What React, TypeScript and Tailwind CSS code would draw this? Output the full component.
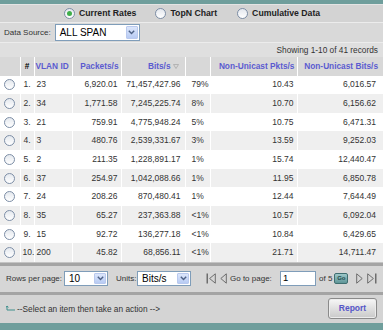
import React from 'react';

type Row = { n: number; vlan: string; pkts: string; bits: string; pct: string; nup: string; nub: string };

const rows: Row[] = [
    { n: 1, vlan: '23', pkts: '6,920.01', bits: '71,457,427.96', pct: '79%', nup: '10.43', nub: '6,016.57' },
    { n: 2, vlan: '34', pkts: '1,771.58', bits: '7,245,225.74', pct: '8%', nup: '10.70', nub: '6,156.62' },
    { n: 3, vlan: '21', pkts: '759.91', bits: '4,775,948.24', pct: '5%', nup: '10.75', nub: '6,471.31' },
    { n: 4, vlan: '3', pkts: '480.76', bits: '2,539,331.67', pct: '3%', nup: '13.59', nub: '9,252.03' },
    { n: 5, vlan: '2', pkts: '211.35', bits: '1,228,891.17', pct: '1%', nup: '15.74', nub: '12,440.47' },
    { n: 6, vlan: '37', pkts: '254.97', bits: '1,042,088.66', pct: '1%', nup: '11.95', nub: '6,850.78' },
    { n: 7, vlan: '24', pkts: '208.26', bits: '870,480.41', pct: '1%', nup: '12.44', nub: '7,644.49' },
    { n: 8, vlan: '35', pkts: '65.27', bits: '237,363.88', pct: '<1%', nup: '10.57', nub: '6,092.04' },
    { n: 9, vlan: '15', pkts: '92.72', bits: '136,277.18', pct: '<1%', nup: '10.84', nub: '6,429.65' },
    { n: 10, vlan: '200', pkts: '45.82', bits: '68,856.11', pct: '<1%', nup: '21.71', nub: '14,711.47' },
];

const Radio = ({ checked = false }: { checked?: boolean }) => (
    <span className="inline-flex w-[11px] h-[11px] rounded-full border border-[#7d8ea6] bg-gradient-to-b from-[#e4e8ee] to-white items-center justify-center shrink-0">
        {checked && <span className="w-[5px] h-[5px] rounded-full bg-[#3fae4a]" />}
    </span>
);

const Chevron = () => (
    <svg width="7" height="5" viewBox="0 0 7 5">
        <path d="M0.8 0.8 L3.5 3.6 L6.2 0.8" fill="none" stroke="#4d6185" strokeWidth="1.4" />
    </svg>
);

const Select = ({ value, className, textSize }: { value: string; className: string; textSize: string }) => (
    <div className={`flex items-stretch shrink-0 border border-[#7f9db9] bg-white p-[1px] ${className}`}>
        <span className={`flex-1 flex items-center pl-[3px] text-black ${textSize}`}>{value}</span>
        <span className="w-[12px] flex items-center justify-center bg-gradient-to-b from-[#dce6fb] to-[#b8cbf3] border border-[#b9c9ee] rounded-[1px]">
            <Chevron />
        </span>
    </div>
);

const NavIcon = ({ dir, bar }: { dir: 'l' | 'r'; bar?: boolean }) => (
    <svg width={bar ? 10 : 7} height="11" viewBox={bar ? '0 0 10 11' : '0 0 7 11'} className="shrink-0">
        {dir === 'l' ? (
            bar ? (
                <>
                    <rect x="0.5" y="0.5" width="1.5" height="10" fill="#6d6d6d" />
                    <path d="M9.3 0.8 L3.6 5.5 L9.3 10.2 Z" fill="none" stroke="#6d6d6d" strokeWidth="1" />
                </>
            ) : (
                <path d="M6.3 0.8 L0.8 5.5 L6.3 10.2 Z" fill="none" stroke="#6d6d6d" strokeWidth="1" />
            )
        ) : bar ? (
            <>
                <path d="M0.7 0.8 L6.4 5.5 L0.7 10.2 Z" fill="none" stroke="#6d6d6d" strokeWidth="1" />
                <rect x="8" y="0.5" width="1.5" height="10" fill="#6d6d6d" />
            </>
        ) : (
            <path d="M0.7 0.8 L6.2 5.5 L0.7 10.2 Z" fill="none" stroke="#6d6d6d" strokeWidth="1" />
        )}
    </svg>
);

const th = 'h-[18.5px] p-0 text-[8.3px] font-bold text-[#5b5bd0] border-r border-white whitespace-nowrap';
const td = 'h-[18.67px] p-0 text-[8.5px] text-[#333] border-r border-white whitespace-nowrap';

export default function App() {
    return (
        <div className="w-[383px] h-[330px] flex flex-col bg-[#d6d6d6] overflow-hidden" style={{ fontFamily: '"Liberation Sans", Arial, sans-serif' }}>
            {/* Top bar */}
            <div className="h-[4px] bg-[#6f9e9c] shrink-0" />

            {/* View options */}
            <div className="h-[19px] flex items-center border-t border-[#e4e4e4] border-b border-b-[#ececec] bg-[#d3d3d3] pl-[64px] text-[8.7px] font-bold text-[#222]">
                <span className="flex items-center gap-[4px]"><Radio checked />Current Rates</span>
                <span className="flex items-center gap-[4px] ml-[19px]"><Radio />TopN Chart</span>
                <span className="flex items-center gap-[4px] ml-[20px]"><Radio />Cumulative Data</span>
            </div>

            {/* Data source */}
            <div className="h-[20px] flex items-center gap-[4px] pl-[4px] bg-[#d9d9d9] border-b border-[#ececec] text-[8px] text-[#333]">
                <span>Data Source:</span>
                <Select value="ALL SPAN" className="w-[85px] h-[17px]" textSize="text-[10px]" />
            </div>

            {/* Records */}
            <div className="h-[14px] flex items-center justify-end pr-[5px] bg-[#dfdfdf] text-[8.3px] text-[#333]">
                Showing 1-10 of 41 records
            </div>

            {/* Table */}
            <table className="w-[383px] table-fixed border-collapse shrink-0">
                <colgroup>
                    <col className="w-[20px]" />
                    <col className="w-[14px]" />
                    <col className="w-[38px]" />
                    <col className="w-[49px]" />
                    <col className="w-[64px]" />
                    <col className="w-[25px]" />
                    <col className="w-[87px]" />
                    <col className="w-[86px]" />
                </colgroup>
                <thead>
                    <tr className="bg-[#d8d8d8]">
                        <th className={th} />
                        <th className={`${th} text-center text-black`}>#</th>
                        <th className={`${th} text-left pl-[1px]`}>VLAN ID</th>
                        <th className={`${th} text-right pr-[2px]`}>Packets/s</th>
                        <th className={`${th} text-right pr-[6px]`}>
                            <span className="inline-flex items-center gap-[2px]">
                                Bits/s
                                <svg width="6" height="5" viewBox="0 0 6 5">
                                    <path d="M0.5 0.5 L5.5 0.5 L3 4.5 Z" fill="none" stroke="#aaaaaa" strokeWidth="0.8" />
                                </svg>
                            </span>
                        </th>
                        <th className={th} />
                        <th className={`${th} text-right pr-[2px]`}>Non-Unicast Pkts/s</th>
                        <th className={`${th} text-right pr-[5px] border-r-0`}>Non-Unicast Bits/s</th>
                    </tr>
                </thead>
                <tbody>
                    {rows.map(r => (
                        <tr key={r.n} className={r.n % 2 === 0 ? 'bg-[#efefef]' : 'bg-white'}>
                            <td className={`${td} pl-[4px]`}>
                                <span className="flex"><Radio /></span>
                            </td>
                            <td className={`${td} ${r.n === 10 ? 'pl-[2px]' : 'pl-[3px]'}`}>{r.n}.</td>
                            <td className={`${td} pl-[2px]`}>{r.vlan}</td>
                            <td className={`${td} text-right pr-[3px]`}>{r.pkts}</td>
                            <td className={`${td} text-right pr-[4px]`}>{r.bits}</td>
                            <td className={`${td} pl-[6px]`}>{r.pct}</td>
                            <td className={`${td} text-right pr-[3px]`}>{r.nup}</td>
                            <td className={`${td} text-right pr-[7px] border-r-0`}>{r.nub}</td>
                        </tr>
                    ))}
                </tbody>
            </table>

            {/* Pagination */}
            <div className="h-[3.5px] bg-[#a4a4a4] border-t border-[#c4c4c4] shrink-0" />
            <div className="h-[26px] flex items-center pl-[6px] bg-[#d6d6d6] text-[8px] text-[#333] whitespace-nowrap">
                <span className="w-[57px] shrink-0">Rows per page:</span>
                <Select value="10" className="w-[44px] h-[15px] ml-[1px]" textSize="text-[10px]" />
                <span className="ml-[8px] w-[20px] shrink-0">Units:</span>
                <Select value="Bits/s" className="w-[54px] h-[15px] ml-[1px]" textSize="text-[10px]" />
                <span className="ml-[15px] flex items-center gap-[4px] shrink-0">
                    <NavIcon dir="l" bar />
                    <NavIcon dir="l" />
                </span>
                <span className="ml-[3px] w-[48px] shrink-0">Go to page:</span>
                <span className="ml-[2px] w-[36px] h-[15px] shrink-0 border border-[#7f9db9] bg-white flex items-center pl-[2px] text-[9.5px] text-black">1</span>
                <span className="ml-[3px] shrink-0">of 5</span>
                <span className="ml-[2px] w-[14px] h-[11px] shrink-0 rounded-[2px] border border-[#3f6e70] bg-gradient-to-b from-[#9cc7c8] to-[#5f9698] flex items-center justify-center text-[6px] font-bold text-[#1f4a4b]">Go</span>
                <span className="ml-[8px] flex items-center gap-[4px] shrink-0">
                    <NavIcon dir="r" />
                    <NavIcon dir="r" bar />
                </span>
            </div>

            {/* Actions */}
            <div className="h-[3px] bg-[#a4a4a4] shrink-0" />
            <div className="flex-1 flex items-center justify-between pl-[6px] pr-[6px] bg-[#d4d4d4]">
                <span className="flex items-center gap-[1px] text-[8.3px] text-[#333]">
                    <svg width="10" height="7" viewBox="0 0 10 7">
                        <path d="M1 5 L9 5" stroke="#3f8f8c" strokeWidth="1" />
                        <path d="M1 5 L1 1 M1 1 L0 2.5 M1 1 L2.5 2.3" fill="none" stroke="#3f8f8c" strokeWidth="1" />
                    </svg>
                    --Select an item then take an action --&gt;
                </span>
                <button className="w-[49px] h-[21px] rounded-[3px] border border-[#8a8a8a] bg-gradient-to-b from-[#f7f7f7] to-[#c9c9c9] text-[8.5px] font-bold text-[#5656c8] shadow-[inset_0_0_0_1px_#ececec]">
                    Report
                </button>
            </div>
            <div className="h-[7px] bg-[#6f9e9c] shrink-0" />
        </div>
    );
}
